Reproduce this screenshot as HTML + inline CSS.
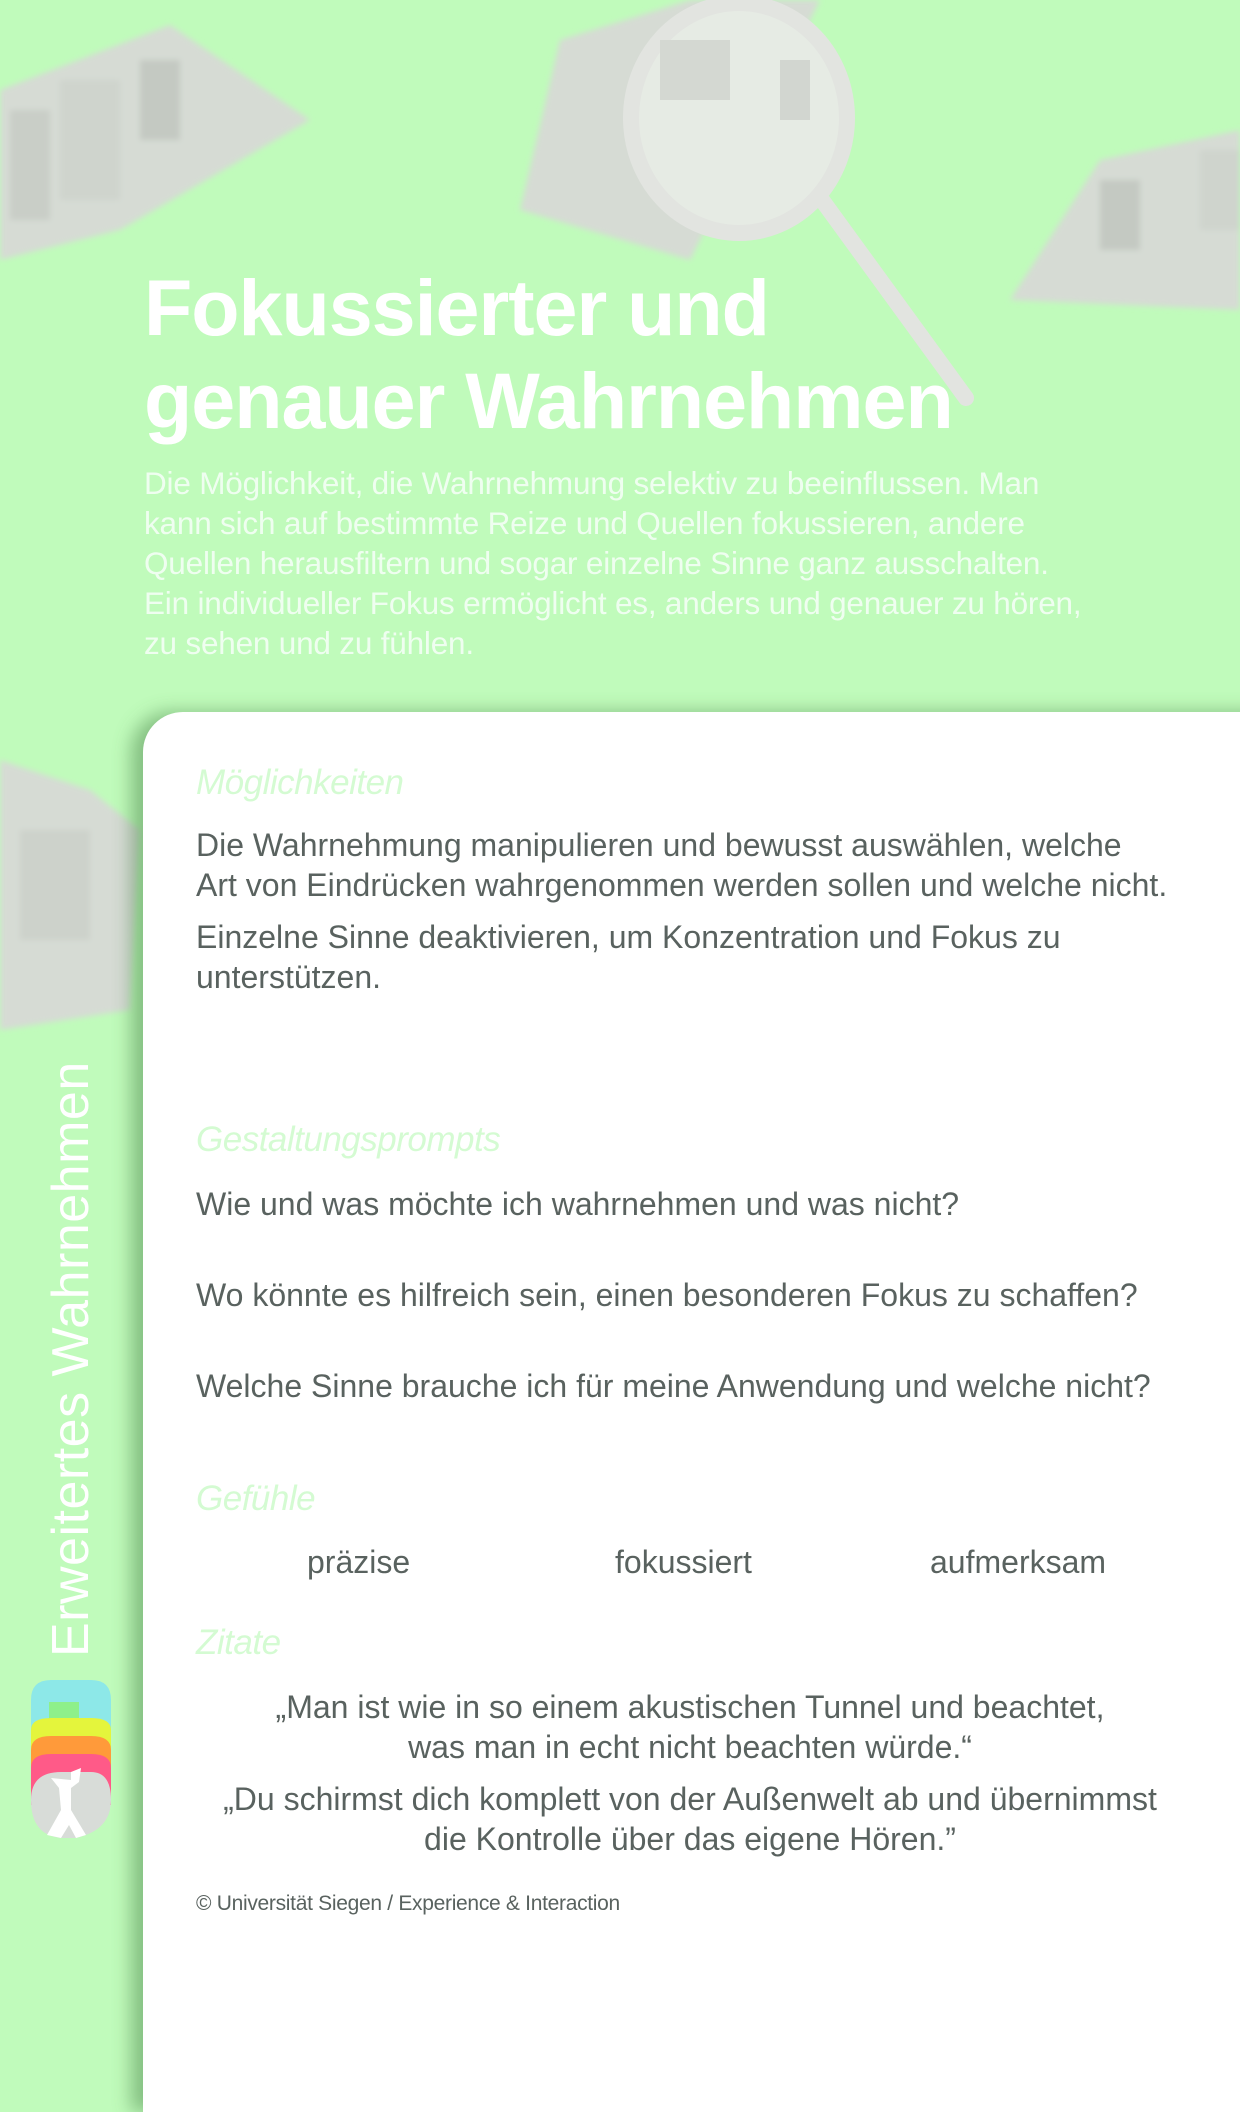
<!DOCTYPE html>
<html><head><meta charset="utf-8"><style>
*{margin:0;padding:0;box-sizing:border-box}
body{width:1240px;height:1949px;background:#c0fbbb;position:relative;overflow:hidden;font-family:"Liberation Sans",sans-serif}
.a{position:absolute;white-space:nowrap}
.t{color:#fff;font-weight:bold;font-size:79px;letter-spacing:-1px;left:144px}
.p{color:#effef0;font-size:31.5px;letter-spacing:-0.2px;left:144px;line-height:40px}
.card{position:absolute;left:143px;top:712px;width:1200px;height:1400px;background:#fff;border-radius:40px 0 0 0;box-shadow:-12px 0 18px rgba(60,120,60,.45)}
.h{color:#d4fbd2;font-style:italic;font-size:35px;letter-spacing:-0.5px;left:196px}
.b{color:#59625f;font-size:32px;letter-spacing:0px;left:196px}
.c{color:#59625f;font-size:32px;width:1000px;left:190px;text-align:center}
</style></head><body>
<svg class="a" style="left:0;top:0" width="1240" height="1100">
<defs><filter id="bl"><feGaussianBlur stdDeviation="3"/></filter></defs>
<g filter="url(#bl)" fill="#d6dbd4">
<polygon points="0,90 170,25 310,120 120,230 0,260"/>
<rect x="10" y="110" width="40" height="110" fill="#c9cec7"/>
<rect x="60" y="80" width="60" height="120" fill="#cfd4cd"/>
<rect x="140" y="60" width="40" height="80" fill="#c4c9c2"/>
<polygon points="560,40 690,0 820,0 690,260 520,210"/>
<polygon points="1010,300 1100,160 1240,130 1240,310"/>
<rect x="1100" y="180" width="40" height="70" fill="#c4c9c2"/>
<rect x="1200" y="150" width="40" height="80" fill="#cfd4cd"/>
<polygon points="0,760 90,790 140,830 130,1010 0,1030"/>
<rect x="20" y="830" width="70" height="110" fill="#cdd2cb"/>
</g>
<ellipse cx="739" cy="118" rx="108" ry="115" fill="#e6ebe4" stroke="#e2e4e0" stroke-width="16"/>
<rect x="660" y="40" width="70" height="60" fill="#d4d8d2"/>
<rect x="780" y="60" width="30" height="60" fill="#d2d6d0"/>
<line x1="822" y1="200" x2="966" y2="398" stroke="#e2e4e0" stroke-width="16" stroke-linecap="round"/>
</svg>
<div class="a t" style="top:262px">Fokussierter und</div>
<div class="a t" style="top:355px">genauer Wahrnehmen</div>
<div class="a p" style="top:463px">Die Möglichkeit, die Wahrnehmung selektiv zu beeinflussen. Man<br>kann sich auf bestimmte Reize und Quellen fokussieren, andere<br>Quellen herausfiltern und sogar einzelne Sinne ganz ausschalten.<br>Ein individueller Fokus ermöglicht es, anders und genauer zu hören,<br>zu sehen und zu fühlen.</div>
<div class="card"></div>
<div class="a" style="left:46px;top:1657px;transform-origin:0 0;transform:rotate(-90deg);color:#fff;font-size:52px;letter-spacing:0.5px;line-height:50px">Erweitertes Wahrnehmen</div>
<svg class="a" style="left:31px;top:1680px" width="80" height="158">
<path d="M0,20 Q0,0 20,0 H60 Q80,0 80,20 V60 H0Z" fill="#8de8e8"/>
<rect x="18" y="22" width="30" height="40" fill="#8ef08a"/>
<path d="M0,50 Q0,38 20,38 H60 Q80,38 80,50 V90 H0Z" fill="#e4f53c"/>
<path d="M0,70 Q0,56 20,56 H60 Q80,56 80,70 V110 H0Z" fill="#ff9a3a"/>
<path d="M0,88 Q0,74 20,74 H60 Q80,74 80,88 V125 H0Z" fill="#ff5a88"/>
<path d="M0,120 Q0,92 30,92 H60 Q80,92 80,120 Q80,150 45,158 H30 Q0,155 0,120Z" fill="#d8dcd8"/>
<path d="M20,98 L40,100 L40,92 L50,88 L48,102 L40,108 L40,130 L55,155 L45,158 L38,145 L30,158 L16,155 L30,130 L28,108Z" fill="#fff"/>
</svg>
<div class="a h" style="top:763px">Möglichkeiten</div>
<div class="a b" style="top:825px;line-height:40px">Die Wahrnehmung manipulieren und bewusst auswählen, welche<br>Art von Eindrücken wahrgenommen werden sollen und welche nicht.</div>
<div class="a b" style="top:917px;line-height:40px">Einzelne Sinne deaktivieren, um Konzentration und Fokus zu<br>unterstützen.</div>
<div class="a h" style="top:1120px">Gestaltungsprompts</div>
<div class="a b" style="top:1186px">Wie und was möchte ich wahrnehmen und was nicht?</div>
<div class="a b" style="top:1277px">Wo könnte es hilfreich sein, einen besonderen Fokus zu schaffen?</div>
<div class="a b" style="top:1368px">Welche Sinne brauche ich für meine Anwendung und welche nicht?</div>
<div class="a h" style="top:1479px">Gefühle</div>
<div class="a b" style="top:1544px;left:307px">präzise</div>
<div class="a b" style="top:1544px;left:615px">fokussiert</div>
<div class="a b" style="top:1544px;left:930px">aufmerksam</div>
<div class="a h" style="top:1623px">Zitate</div>
<div class="a c" style="top:1687px;line-height:40px">„Man ist wie in so einem akustischen Tunnel und beachtet,<br>was man in echt nicht beachten würde.“</div>
<div class="a c" style="top:1779px;line-height:40px">„Du schirmst dich komplett von der Außenwelt ab und übernimmst<br>die Kontrolle über das eigene Hören.”</div>
<div class="a" style="left:196px;top:1892px;font-size:21px;color:#59625f;letter-spacing:-0.3px">© Universität Siegen / Experience &amp; Interaction</div>
</body></html>
